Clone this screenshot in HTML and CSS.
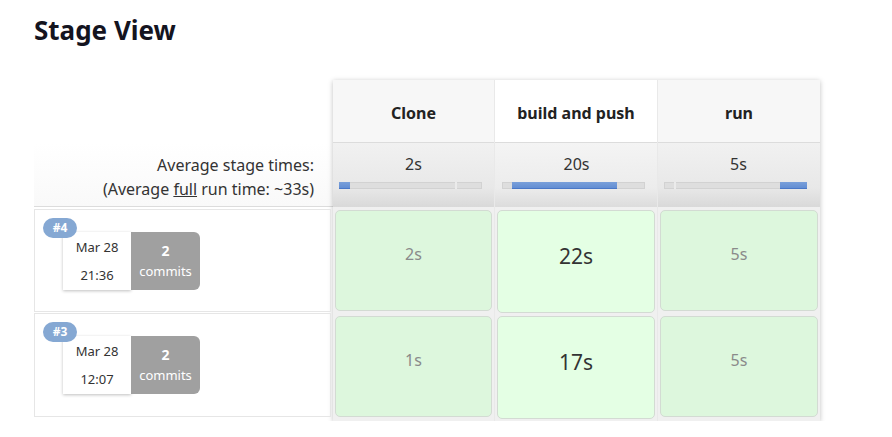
FILE: index.html
```html
<!DOCTYPE html>
<html>
<head>
<meta charset="utf-8">
<link rel="stylesheet" href="styles.css">
</head>
<body>
<div class="page">
  <h1 class="title">Stage View</h1>
  <div class="stage-view">
    <div class="left">
      <div class="left-head"></div>
      <div class="avg-box">
        <div>Average stage times:</div>
        <div>(Average <u>full</u> run time: ~33s)</div>
      </div>
      <div class="build-row first">
        <span class="badge">#4</span>
        <div class="build-info">
          <div class="date"><span>Mar 28</span><span>21:36</span></div>
          <div class="commits"><b>2</b><span>commits</span></div>
        </div>
      </div>
      <div class="build-row">
        <span class="badge">#3</span>
        <div class="build-info">
          <div class="date"><span>Mar 28</span><span>12:07</span></div>
          <div class="commits"><b>2</b><span>commits</span></div>
        </div>
      </div>
    </div>
    <div class="table">
      <div class="col">
        <div class="head">Clone</div>
        <div class="avg">
          <div class="avg-time">2s</div>
          <div class="bar"><span class="fill" style="left:0;width:11px"></span><span class="tick" style="left:116px"></span></div>
        </div>
        <div class="row r1"><div class="cell">2s</div></div>
        <div class="row r2"><div class="cell">1s</div></div>
      </div>
      <div class="col active">
        <div class="head">build and push</div>
        <div class="avg">
          <div class="avg-time">20s</div>
          <div class="bar"><span class="fill" style="left:10px;width:105px"></span></div>
        </div>
        <div class="row r1"><div class="cell big">22s</div></div>
        <div class="row r2"><div class="cell big">17s</div></div>
      </div>
      <div class="col">
        <div class="head">run</div>
        <div class="avg">
          <div class="avg-time">5s</div>
          <div class="bar"><span class="tick" style="left:10px"></span><span class="fill" style="left:116px;width:27px"></span></div>
        </div>
        <div class="row r1"><div class="cell">5s</div></div>
        <div class="row r2"><div class="cell">5s</div></div>
      </div>
    </div>
  </div>
</div>
</body>
</html>
```
FILE: styles.css
```css
html, body {
  margin: 0;
  padding: 0;
  background: #fff;
  font-family: "Noto Sans", "Open Sans", sans-serif;
  color: #333;
}

.page {
  padding: 11px 0 0 34px;
}

.title {
  margin: 0;
  font-size: 26px;
  font-weight: 700;
  color: #14141f;
  line-height: 38px;
}

.stage-view {
  display: flex;
  margin-top: 31px;
}

.left {
  width: 299px;
  display: flex;
  flex-direction: column;
}

.left-head {
  height: 63px;
}

.avg-box {
  height: 64px;
  box-sizing: border-box;
  border-bottom: 1px solid #dcdcdc;
  background: linear-gradient(#fff, #f9f9f9);
  text-align: right;
  padding: 10px 19px 0 0;
  font-size: 16px;
  line-height: 24px;
  color: #333;
}

.build-row {
  position: relative;
  height: 104px;
  width: 297px;
  box-sizing: border-box;
  border: 1px solid #e6e6e6;
  margin-top: 1px;
}

.build-row.first {
  margin-top: 2px;
  height: 103px;
}

.badge {
  position: absolute;
  left: 8px;
  top: 8px;
  z-index: 2;
  width: 34px;
  height: 20px;
  border-radius: 10px;
  background: #85a8d3;
  color: #fff;
  font-size: 12px;
  font-weight: 700;
  line-height: 20px;
  text-align: center;
}

.build-info {
  display: flex;
  margin: 22px 0 0 28px;
  width: 137px;
  height: 58px;
}

.date {
  width: 68px;
  background: #fff;
  box-shadow: 0 1px 3px rgba(0, 0, 0, 0.25);
  display: flex;
  flex-direction: column;
  align-items: center;
  justify-content: center;
  gap: 13px;
  font-size: 13px;
  line-height: 15px;
  color: #333;
}

.commits {
  width: 69px;
  background: #a0a0a0;
  border-radius: 0 6px 6px 0;
  color: #fff;
  display: flex;
  flex-direction: column;
  align-items: center;
  justify-content: center;
  gap: 6px;
  font-size: 13px;
  line-height: 15px;
}

.commits b {
  font-size: 14px;
}

.table {
  display: flex;
  gap: 1px;
  background: #e9e9e9;
  box-shadow: 0 1px 5px rgba(0, 0, 0, 0.25);
  height: 341px;
  align-self: flex-start;
}

.col {
  width: 162px;
  display: flex;
  flex-direction: column;
  background: #f0f0f0;
}

.col:first-child {
  width: 161px;
}

.head {
  height: 62px;
  box-sizing: border-box;
  padding-top: 4px;
  border-bottom: 1px solid #dcdcdc;
  background: #f7f7f7;
  display: flex;
  align-items: center;
  justify-content: center;
  font-size: 16px;
  font-weight: 700;
  color: #222;
}

.head {
  height: 63px;
}

.col.active .head {
  background: #fff;
}

.avg {
  height: 64px;
  box-sizing: border-box;
  background: linear-gradient(#f1f1f1 0%, #e8e8e8 70%, #d9d9d9 100%);
  padding: 10px 0 0 6px;
}

.col.active .avg {
  background: linear-gradient(#f4f4f4 0%, #ececec 70%, #dcdcdc 100%);
  padding-left: 7px;
}

.avg-time {
  text-align: center;
  width: 149px;
  font-size: 16px;
  line-height: 22px;
  color: #333;
}

.bar {
  position: relative;
  width: 143px;
  margin-top: 7px;
  height: 7px;
  background: #dedede;
  box-shadow: inset 0 0 0 1px #d2d2d2;
}

.bar .fill {
  position: absolute;
  top: 0;
  height: 7px;
  background: linear-gradient(#7aa0da, #5f8bd2);
  box-shadow: inset 0 -1px 0 #4a78c7;
}

.bar .tick {
  position: absolute;
  top: 0;
  width: 2px;
  height: 7px;
  background: #ebebeb;
}

.row {
  box-sizing: border-box;
  padding: 3px 2px 0;
}

.row.r1 {
  height: 107px;
}

.row.r2 {
  height: 106px;
  padding-top: 2px;
}

.cell {
  height: 101px;
  box-sizing: border-box;
  border: 1px solid #d3dbd3;
  border-radius: 5px;
  background: #ddf7dd;
  display: flex;
  align-items: center;
  justify-content: center;
  padding-bottom: 14px;
  font-size: 16px;
  color: #8a8a8a;
}

.cell.big {
  height: 103px;
  background: #e4ffe4;
  font-size: 21px;
  color: #333;
  padding-bottom: 12px;
}
```
